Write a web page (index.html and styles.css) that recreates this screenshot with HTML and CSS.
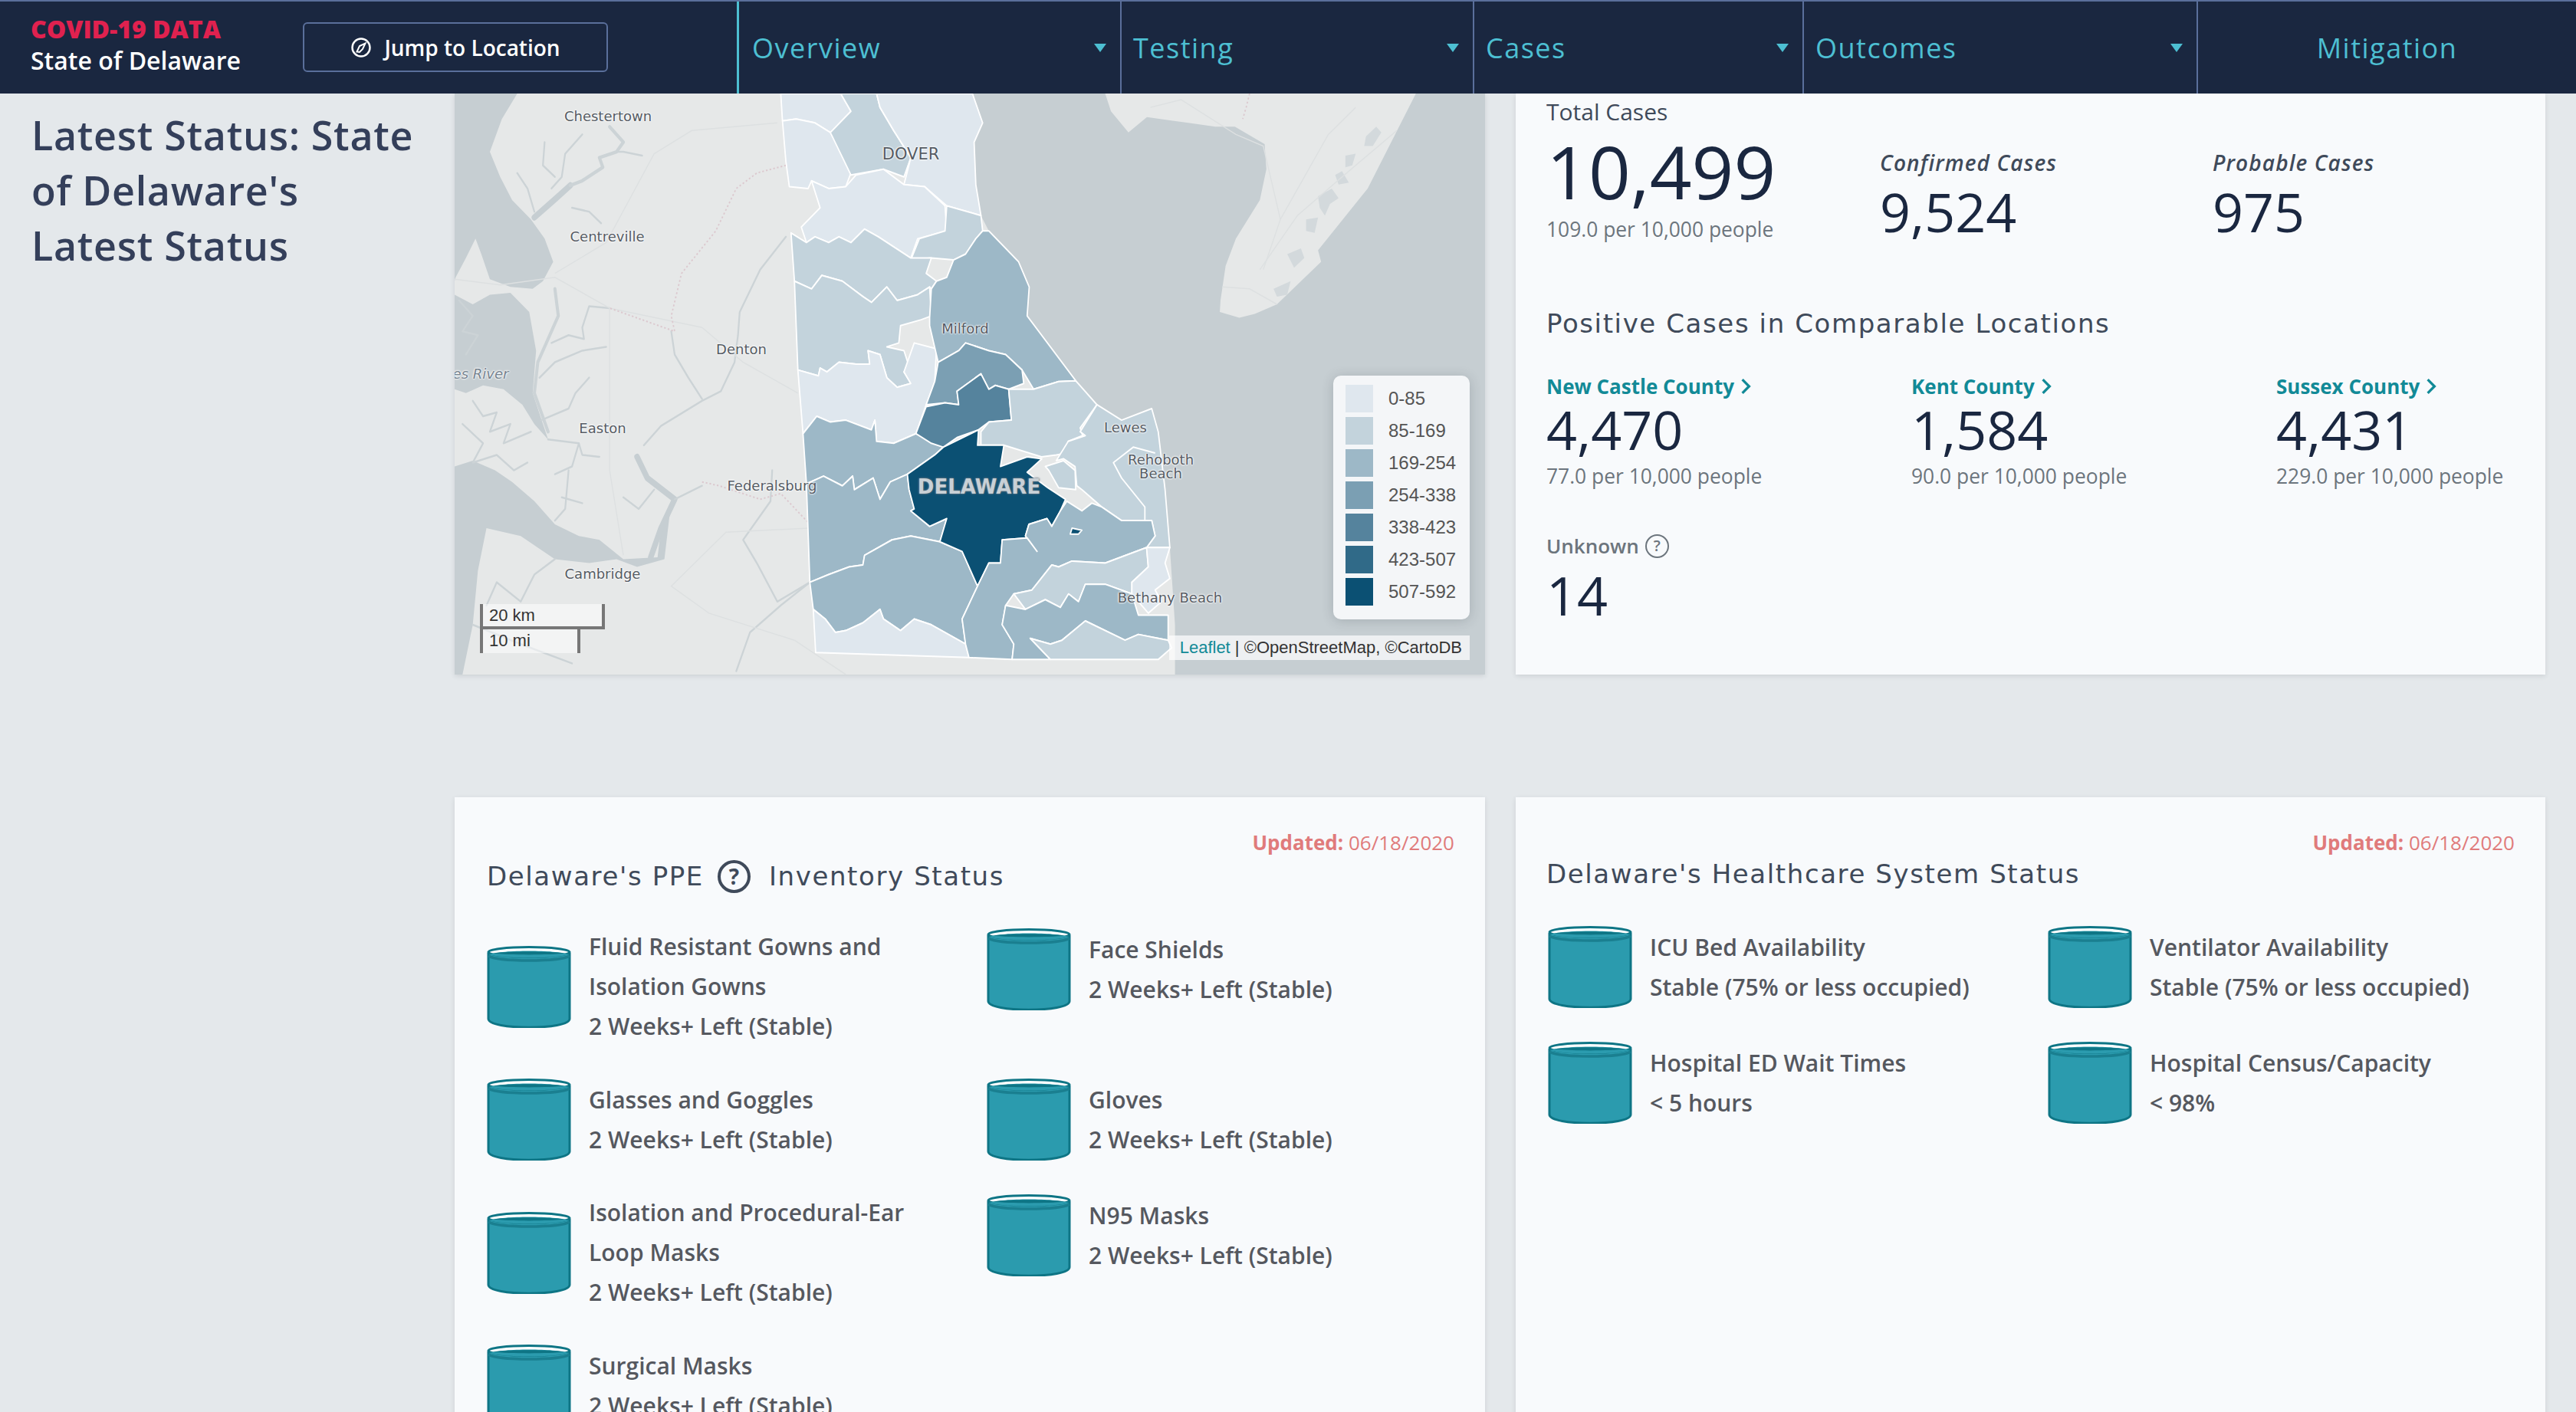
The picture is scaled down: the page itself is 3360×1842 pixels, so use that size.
FILE: index.html
```html
<!DOCTYPE html>
<html lang="en">
<head>
  <meta charset="UTF-8"/>
  <title>COVID-19 Data | State of Delaware</title>
  <link rel="stylesheet" href="styles.css">
</head>
<body>
  <svg class="defs" width="0" height="0">
    <symbol id="barrel" viewBox="0 0 110 107">
      <path d="M2 9V95C2 110 108 110 108 95V9" fill="#2b9bae" stroke="#0e7585" stroke-width="3"/>
      <ellipse cx="55" cy="8" rx="53" ry="6.5" fill="#fff" stroke="#0e7585" stroke-width="3"/>
      <path d="M3 11C20 5 90 5 107 11C90 17 20 17 3 11Z" fill="#2b9bae"/>
      <path d="M8 9.5C30 6.5 80 6.5 102 9.5C80 12 30 12 8 9.5Z" fill="#0e7585"/>
      <path d="M2 13C15 21 95 21 108 13" fill="none" stroke="#1a7f90" stroke-width="3.5"/>
    </symbol>
  </svg>

  <header class="topbar">
    <div class="brand">
      <div class="brand-title">COVID-19 DATA</div>
      <div class="brand-sub">State of Delaware</div>
    </div>
    <button class="jump-btn">
      <svg class="compass" viewBox="0 0 28 28" width="28" height="28">
        <circle cx="14" cy="14" r="11.5" fill="none" stroke="#fff" stroke-width="2.4"/>
        <path d="M19.5 8.5L16 16L12 20L8.5 19.5L12 12Z" fill="none" stroke="#fff" stroke-width="2"/>
      </svg>
      Jump to Location
    </button>
    <nav class="nav">
      <a class="nav-item nav-active">Overview<i class="caret"></i></a>
      <a class="nav-item">Testing<i class="caret"></i></a>
      <a class="nav-item">Cases<i class="caret"></i></a>
      <a class="nav-item">Outcomes<i class="caret"></i></a>
      <a class="nav-item nav-center">Mitigation</a>
    </nav>
  </header>

  <main class="page">
    <aside class="sidebar">
      <h1>Latest Status: State<br>of Delaware's<br>Latest Status</h1>
    </aside>

    <div class="content">
      <section class="map">
        <svg class="map-svg" viewBox="7 24 3011 1505" preserveAspectRatio="none">
          <!-- land -->
          <polygon class="land" points="7,24 1520,24 1550,100 1525,150 1530,260 1545,340 1568,380 1655,460 1686,525 1680,600 1822,768 1884,830 1956,870 2044,840 2063,900 2083,1050 2097,1200 2112,1400 2112,1529 7,1529"/>
          <polygon class="land" points="1908,24 1925,70 1976,125 2030,85 2151,100 2230,110 2287,110 2374,155 2379,220 2360,300 2290,400 2260,470 2245,560 2243,590 2300,605 2345,595 2410,570 2539,460 2530,430 2675,270 2816,24"/>
          <!-- bay -->
          <polygon class="water" points="7,24 190,24 145,90 110,175 140,240 175,300 230,350 270,400 295,460 265,510 235,530 170,525 110,505 85,440 68,400 40,450 10,500 7,510"/>
          <polygon class="water" points="7,545 60,570 110,545 170,540 225,590 245,690 235,800 280,920 240,880 205,830 150,790 90,780 40,800 7,790"/>
          <polygon class="water" points="7,990 60,975 125,1000 175,1030 240,1080 300,1140 370,1170 430,1180 500,1230 600,1225 610,1150 640,1080 620,1230 540,1250 480,1230 400,1240 300,1230 200,1170 100,1150 75,1260 60,1400 30,1529 7,1529"/>
          <polyline class="river wide" points="240,345 300,298 345,262"/>
          <polyline class="river mid" points="345,262 380,250 440,215 430,190 480,175 500,150 460,110"/>
          <polyline class="river" points="480,175 500,175 555,185"/>
          <polyline class="river" points="380,130 330,180 320,240 290,270"/>
          <polyline class="river" points="270,150 265,210 300,240"/>
          <polyline class="river" points="190,230 220,270 240,330"/>
          <polyline class="river" points="350,320 400,330 435,360"/>
          <polyline class="river mid" points="300,530 310,600 280,660 250,720 240,800 280,900"/>
          <polyline class="river" points="460,580 400,575 380,630 385,660 340,650 290,670"/>
          <polyline class="river" points="450,680 380,690 300,720 255,760"/>
          <polyline class="river" points="400,760 360,800 340,840 260,870"/>
          <polyline class="river" points="280,920 370,930 350,990 300,1010"/>
          <polyline class="river" points="370,930 380,960 430,965"/>
          <polyline class="river" points="320,1070 380,1085"/>
          <polyline class="river" points="340,1000 330,1100 300,1130"/>
          <polyline class="river" points="60,820 90,860 130,850 110,900 170,880 150,930 230,900"/>
          <polyline class="river" points="30,880 90,930 60,980 130,960 180,1000 220,980"/>
          <polyline class="river" points="20,560 60,600 30,640 75,650 40,700"/>
          <polyline class="river" points="300,1230 240,1270 200,1340 130,1290 100,1350"/>
          <polyline class="river" points="60,1400 200,1450 350,1500"/>
          <polyline class="river wide" points="540,965 570,1020 650,1075 610,1150 580,1225"/>
          <polyline class="river" points="975,395 900,480 840,590 835,650 825,720 785,795 730,820 610,885 560,935"/>
          <polyline class="river" points="640,640 650,700 690,760 730,815"/>
          <polyline class="river" points="1045,1290 960,1350 870,1420 830,1520"/>
          <polyline class="river" points="1045,1290 950,1340 890,1240 850,1180 930,1080 935,1000"/>
          <polyline class="river" points="650,1075 730,1040"/>
          <polyline class="river" points="500,1070 545,1100 590,1050"/>
          <polyline class="road" points="7,505 140,520 300,500 460,580 730,630 850,720 1010,800"/>
          <polyline class="road" points="300,490 450,410 590,180 700,120 950,100"/>
          <polyline class="road" points="460,580 460,1000 500,1220"/>
          <polyline class="road" points="1040,1150 800,1160 640,1300 750,1370 1000,1440"/>
          <polyline class="road" points="1150,1529 1000,1440"/>
          <polyline class="border-line" points="975,210 890,230 830,270 770,380 670,490 640,600 650,640 460,580"/>
          <polyline class="border-line" points="730,1030 780,1040 900,1075 960,1060 1040,1135"/>
          <!-- cape may detail -->
          <polygon class="pond" points="2670,135 2700,110 2715,125 2690,160 2665,160"/>
          <polygon class="pond" points="2610,185 2640,180 2630,210 2610,215"/>
          <polygon class="pond" points="2580,235 2600,225 2620,255 2590,260"/>
          <polygon class="pond" points="2530,290 2570,270 2590,295 2565,310 2550,340 2535,320"/>
          <polygon class="pond" points="2495,350 2530,345 2520,385 2495,380"/>
          <polygon class="pond" points="2440,440 2480,425 2490,450 2460,475"/>
          <polygon class="pond" points="2400,530 2450,510 2440,545 2410,550"/>
          <polyline class="road" points="2360,480 2470,340 2600,240 2760,120"/>
          <polyline class="road" points="2250,525 2330,530 2410,570"/>
          <polyline class="road" points="2040,60 2130,40 2290,130 2370,160 2420,350 2370,480"/>
          <polyline class="road" points="2420,350 2560,130 2640,60"/>
          <polyline class="border-line" points="2330,24 2320,60 2310,90"/>

          <!-- counties -->
          <g class="tracts">
            <polygon class="c0" points="960,24 1135,24 1165,70 1105,125 1060,100 1005,90 965,95"/>
            <polygon class="c0" points="965,95 1005,90 1060,100 1105,125 1140,180 1165,230 1150,265 1100,270 1050,250 1040,270 985,265 975,200"/>
            <polygon class="c1" points="1135,24 1240,24 1250,60 1290,120 1340,190 1320,240 1260,220 1165,235 1105,125 1165,70"/>
            <polygon class="c0" points="1240,24 1520,24 1550,100 1525,150 1530,260 1545,340 1445,315 1380,265 1320,260 1340,190 1290,120 1250,60"/>
            <polygon class="c0" points="1050,250 1100,270 1150,265 1180,235 1260,220 1320,260 1380,265 1440,315 1445,380 1360,400 1340,450 1245,395 1205,375 1165,410 1130,395 1100,410 1060,395 1035,410 1020,370 1075,320"/>
            <polygon class="c1" points="1445,315 1545,340 1550,380 1530,400 1500,440 1465,455 1400,450 1340,455 1365,400 1440,380"/>
            <polygon class="c1" points="990,385 1035,410 1060,395 1100,410 1130,395 1165,410 1205,375 1245,395 1340,450 1400,450 1385,490 1415,510 1400,530 1395,525 1360,545 1300,560 1270,525 1225,565 1200,550 1140,510 1080,495 1050,530 1000,510"/>
            <polygon class="c1" points="1000,510 1050,530 1080,495 1140,510 1200,550 1225,565 1270,525 1300,560 1360,545 1395,525 1400,600 1370,610 1310,625 1305,670 1270,680 1320,690 1340,745 1320,745 1340,775 1300,785 1270,760 1250,700 1215,690 1220,725 1180,725 1130,720 1095,745 1075,735 1070,755 1010,740"/>
            <polygon class="c0" points="1010,740 1070,755 1075,735 1095,745 1130,720 1180,725 1220,725 1215,690 1250,700 1270,760 1300,785 1340,775 1320,745 1350,670 1415,685 1410,770 1385,830 1355,905 1290,930 1240,925 1235,870 1225,895 1150,870 1105,875 1065,860 1025,905"/>
            <polygon class="c2" points="1025,905 1065,860 1105,875 1150,870 1225,895 1235,870 1240,925 1290,930 1355,905 1435,940 1410,960 1330,1010 1280,1030 1250,1075 1230,1020 1175,1050 1170,1015 1140,1040 1085,1015 1035,1035"/>
            <polygon class="c2" points="1035,1035 1085,1015 1140,1040 1170,1015 1175,1050 1230,1020 1250,1075 1280,1030 1330,1010 1335,1050 1350,1100 1340,1105 1395,1145 1445,1125 1425,1185 1340,1170 1285,1180 1205,1220 1200,1245 1160,1250 1100,1270 1045,1290"/>
            <polygon class="c2" points="1045,1290 1100,1270 1160,1250 1200,1245 1205,1220 1285,1180 1340,1170 1425,1185 1490,1210 1535,1300 1490,1385 1500,1450 1400,1400 1350,1385 1310,1415 1260,1385 1250,1360 1200,1395 1150,1415 1120,1420 1090,1385 1055,1360"/>
            <polygon class="c0" points="1055,1360 1090,1385 1120,1420 1150,1415 1200,1395 1250,1360 1260,1385 1310,1415 1350,1385 1400,1400 1500,1450 1510,1485 1062,1472"/>
            <polygon class="c2" points="1500,440 1530,400 1550,380 1568,380 1655,460 1686,525 1680,600 1822,768 1772,770 1699,790 1665,740 1617,700 1568,690 1500,670 1480,690 1420,720 1395,625 1395,605 1400,530 1415,510 1445,500 1465,455"/>
            <polygon class="c3" points="1420,720 1480,690 1500,670 1568,690 1617,700 1665,740 1670,775 1626,790 1587,780 1568,790 1545,750 1475,795 1480,830 1440,825 1385,830 1410,770"/>
            <polygon class="c4" points="1385,835 1440,825 1480,830 1475,795 1545,750 1568,790 1587,780 1626,790 1634,870 1568,875 1538,895 1475,915 1435,940 1400,930 1355,905"/>
            <polygon class="c1" points="1545,935 1545,900 1568,875 1634,870 1626,790 1699,790 1772,770 1822,768 1884,830 1835,890 1842,910 1800,925 1830,950 1765,960 1722,965 1612,935"/>
            <polygon class="c1" points="1884,830 1956,870 2044,840 2063,900 2083,1050 2097,1200 2029,1200 2054,1170 2044,1130 1956,1130 1898,1095 1840,1050 1825,1040 1820,990 1786,970 1765,975 1800,925 1850,910 1835,900"/>
            <polygon class="c1" points="1733,990 1786,975 1820,1000 1822,1050 1772,1045 1743,1000"/>
            <polygon class="c6" points="1435,940 1538,895 1535,935 1612,935 1602,990 1680,965 1723,970 1680,1005 1740,1045 1792,1075 1777,1105 1752,1145 1738,1125 1685,1140 1675,1170 1709,1210 1680,1175 1607,1180 1602,1240 1568,1240 1535,1300 1490,1210 1425,1185 1445,1125 1395,1145 1340,1105 1350,1100 1335,1050 1330,1010 1410,960"/>
            <polygon class="c2" points="1777,1105 1796,1080 1840,1105 1869,1085 1898,1095 1956,1130 2044,1130 2054,1170 2029,1200 1908,1240 1811,1235 1772,1250 1752,1245 1694,1310 1641,1320 1617,1350 1607,1400 1641,1450 1636,1490 1510,1485 1500,1450 1490,1385 1535,1300 1568,1240 1602,1240 1607,1180 1680,1175 1709,1210 1675,1170 1685,1140 1738,1125 1752,1145"/>
            <polygon class="c1" points="1752,1245 1772,1250 1811,1235 1908,1240 2029,1200 2034,1250 1986,1290 1986,1320 1908,1295 1850,1295 1830,1340 1801,1320 1777,1355 1733,1335 1675,1360 1641,1320 1694,1310"/>
            <polygon class="c2" points="1675,1360 1733,1335 1777,1355 1801,1320 1830,1340 1850,1295 1908,1295 1986,1320 2005,1375 2092,1375 2092,1440 2005,1425 1966,1440 1850,1390 1782,1440 1748,1450 1689,1435 1748,1490 1636,1490 1641,1450 1607,1400 1617,1350"/>
            <polygon class="c1" points="1689,1435 1748,1450 1782,1440 1850,1390 1966,1440 2005,1425 2092,1440 2102,1460 2063,1490 1748,1490"/>
            <polygon class="c0" points="2029,1200 2097,1200 2083,1240 2097,1280 2054,1310 2073,1340 2034,1370 1986,1320 1986,1290 2034,1250"/>
            <polygon class="c6" points="1811,1150 1840,1155 1830,1165 1806,1165"/>
            <polyline class="tract-line" points="2054,955 1990,940 1932,980 1956,1020 2024,1095 2024,1130"/>
          </g>
        </svg>

        <span class="map-label lbl-chestertown">Chestertown</span>
        <span class="map-label lbl-centreville">Centreville</span>
        <span class="map-label lbl-denton">Denton</span>
        <span class="map-label lbl-easton">Easton</span>
        <span class="map-label lbl-federalsburg">Federalsburg</span>
        <span class="map-label lbl-cambridge">Cambridge</span>
        <span class="map-label lbl-river">es River</span>
        <span class="map-label lbl-dover">DOVER</span>
        <span class="map-label lbl-milford">Milford</span>
        <span class="map-label lbl-delaware">DELAWARE</span>
        <span class="map-label lbl-lewes">Lewes</span>
        <span class="map-label lbl-rehoboth">Rehoboth<br>Beach</span>
        <span class="map-label lbl-bethany">Bethany Beach</span>

        <div class="scale">
          <div class="scale-km">20 km</div>
          <div class="scale-mi">10 mi</div>
        </div>

        <div class="legend">
          <div class="legend-row"><i class="swatch s0"></i>0-85</div>
          <div class="legend-row"><i class="swatch s1"></i>85-169</div>
          <div class="legend-row"><i class="swatch s2"></i>169-254</div>
          <div class="legend-row"><i class="swatch s3"></i>254-338</div>
          <div class="legend-row"><i class="swatch s4"></i>338-423</div>
          <div class="legend-row"><i class="swatch s5"></i>423-507</div>
          <div class="legend-row"><i class="swatch s6"></i>507-592</div>
        </div>

        <div class="attribution"><a>Leaflet</a> | ©OpenStreetMap, ©CartoDB</div>
      </section>

      <section class="card cases-card">
        <div class="totals">
          <div class="total-main">
            <div class="total-label">Total Cases</div>
            <div class="total-num">10,499</div>
            <div class="per">109.0 per 10,000 people</div>
          </div>
          <div class="total-part">
            <div class="part-label">Confirmed Cases</div>
            <div class="num">9,524</div>
          </div>
          <div class="total-part">
            <div class="part-label">Probable Cases</div>
            <div class="num">975</div>
          </div>
        </div>

        <h2 class="card-title compare-title">Positive Cases in Comparable Locations</h2>

        <div class="counties">
          <div>
            <a class="county-link">New Castle County<svg class="chev" viewBox="0 0 12 20" width="14" height="22"><path d="M2 2L10 10L2 18" fill="none" stroke="#128a97" stroke-width="3"/></svg></a>
            <div class="num">4,470</div>
            <div class="per">77.0 per 10,000 people</div>
          </div>
          <div>
            <a class="county-link">Kent County<svg class="chev" viewBox="0 0 12 20" width="14" height="22"><path d="M2 2L10 10L2 18" fill="none" stroke="#128a97" stroke-width="3"/></svg></a>
            <div class="num">1,584</div>
            <div class="per">90.0 per 10,000 people</div>
          </div>
          <div>
            <a class="county-link">Sussex County<svg class="chev" viewBox="0 0 12 20" width="14" height="22"><path d="M2 2L10 10L2 18" fill="none" stroke="#128a97" stroke-width="3"/></svg></a>
            <div class="num">4,431</div>
            <div class="per">229.0 per 10,000 people</div>
          </div>
        </div>

        <div class="unknown">
          <div class="unknown-label">Unknown <span class="help help-small">?</span></div>
          <div class="num">14</div>
        </div>
      </section>

      <section class="card status-card">
        <div class="updated"><b>Updated:</b> 06/18/2020</div>
        <h2 class="card-title ppe-title">Delaware's PPE <span class="help help-big">?</span> Inventory Status</h2>
        <div class="items ppe-items">
          <div class="item">
            <svg class="barrel"><use href="#barrel"/></svg>
            <div class="item-text">Fluid Resistant Gowns and<br>Isolation Gowns<br>2 Weeks+ Left (Stable)</div>
          </div>
          <div class="item item-shift">
            <svg class="barrel"><use href="#barrel"/></svg>
            <div class="item-text">Face Shields<br>2 Weeks+ Left (Stable)</div>
          </div>
          <div class="item">
            <svg class="barrel"><use href="#barrel"/></svg>
            <div class="item-text">Glasses and Goggles<br>2 Weeks+ Left (Stable)</div>
          </div>
          <div class="item">
            <svg class="barrel"><use href="#barrel"/></svg>
            <div class="item-text">Gloves<br>2 Weeks+ Left (Stable)</div>
          </div>
          <div class="item">
            <svg class="barrel"><use href="#barrel"/></svg>
            <div class="item-text">Isolation and Procedural-Ear<br>Loop Masks<br>2 Weeks+ Left (Stable)</div>
          </div>
          <div class="item item-shift">
            <svg class="barrel"><use href="#barrel"/></svg>
            <div class="item-text">N95 Masks<br>2 Weeks+ Left (Stable)</div>
          </div>
          <div class="item">
            <svg class="barrel"><use href="#barrel"/></svg>
            <div class="item-text">Surgical Masks<br>2 Weeks+ Left (Stable)</div>
          </div>
        </div>
      </section>

      <section class="card status-card">
        <div class="updated"><b>Updated:</b> 06/18/2020</div>
        <h2 class="card-title care-title">Delaware's Healthcare System Status</h2>
        <div class="items care-items">
          <div class="item">
            <svg class="barrel"><use href="#barrel"/></svg>
            <div class="item-text">ICU Bed Availability<br>Stable (75% or less occupied)</div>
          </div>
          <div class="item">
            <svg class="barrel"><use href="#barrel"/></svg>
            <div class="item-text">Ventilator Availability<br>Stable (75% or less occupied)</div>
          </div>
          <div class="item">
            <svg class="barrel"><use href="#barrel"/></svg>
            <div class="item-text">Hospital ED Wait Times<br>&lt; 5 hours</div>
          </div>
          <div class="item">
            <svg class="barrel"><use href="#barrel"/></svg>
            <div class="item-text">Hospital Census/Capacity<br>&lt; 98%</div>
          </div>
        </div>
      </section>
    </div>
  </main>
</body>
</html>
```

FILE: styles.css
```css
html, body {
  margin:0;
  height:1842px;
  overflow:hidden;
}
body {
  background:#e4e8eb;
  color:#1a2740;
  font-family:'Open Sans',Arial,sans-serif;
}
.defs { position:absolute; }

/* top bar */
.topbar {
  height:122px;
  box-sizing:border-box;
  border-top:2px solid #5a6f9b;
  background:#1a2740;
  display:flex;
  align-items:stretch;
}
.brand {
  width:395px;
  box-sizing:border-box;
  padding:14px 0 0 40px;
}
.brand-title {
  color:#e0214f;
  font-size:32px;
  font-weight:800;
  line-height:44px;
}
.brand-sub {
  color:#fff;
  font-size:32px;
  font-weight:600;
  line-height:38px;
}
.jump-btn {
  width:398px;
  height:65px;
  margin:27px 168px 0 0;
  box-sizing:border-box;
  background:none;
  border:2px solid #5a6f9b;
  border-radius:6px;
  color:#fff;
  font-family:inherit;
  font-size:28px;
  font-weight:600;
  display:flex;
  align-items:center;
  justify-content:center;
  gap:16px;
}
.nav {
  flex:1;
  display:grid;
  grid-template-columns:500px 460px 430px 514px 495px;
}
.nav-item {
  position:relative;
  box-sizing:border-box;
  border-left:2px solid #5a6f9b;
  padding:0 0 0 15px;
  color:#4dbfd2;
  font-size:36px;
  font-weight:500;
  letter-spacing:1.5px;
  line-height:122px;
  height:120px;
}
.nav-active {
  border-left:3px solid #4dbfd2;
  padding-left:17px;
}
.nav-center { text-align:center; padding:0; }
.caret {
  position:absolute;
  right:18px;
  top:55px;
  width:0;
  height:0;
  border-left:8.5px solid transparent;
  border-right:8.5px solid transparent;
  border-top:11px solid #4dbfd2;
}

/* page */
.page {
  display:flex;
}
.sidebar {
  width:593px;
  flex:none;
  box-sizing:border-box;
  padding:18px 0 0 41px;
}
.sidebar h1 {
  margin:0;
  color:#343f5a;
  font-size:52px;
  font-weight:600;
  letter-spacing:0.7px;
  line-height:72px;
}
.content {
  width:2727px;
  display:grid;
  grid-template-columns:1344px 1343px;
  grid-template-rows:758px 900px;
  column-gap:40px;
  row-gap:160px;
}

/* map */
.map {
  position:relative;
  overflow:hidden;
  background:#c6ced2;
  box-shadow:0 2px 6px rgba(40,50,60,0.12);
}
.map-svg {
  display:block;
  width:100%;
  height:100%;
}
.land { fill:#e6e8e8; }
.water { fill:#c6ced2; }
.pond { fill:#d3d9dc; }
.river { fill:none; stroke:#ccd3d6; stroke-width:5; stroke-linejoin:round; stroke-linecap:round; }
.river.mid { stroke-width:9; }
.river.wide { stroke:#c6ced2; stroke-width:16; }
.road { fill:none; stroke:#dde0e1; stroke-width:3; }
.border-line { fill:none; stroke:#dcc9cf; stroke-width:4; stroke-dasharray:5 6; }
.tracts polygon, .tract-line { stroke:#fff; stroke-width:4; stroke-linejoin:round; }
.tract-line { fill:none; }
.c0 { fill:#dfe7ee; }
.c1 { fill:#c3d3dc; }
.c2 { fill:#9db8c7; }
.c3 { fill:#7b9fb3; }
.c4 { fill:#55839d; }
.c5 { fill:#306a88; }
.c6 { fill:#0b5073; }

.map-label {
  position:absolute;
  transform:translate(-50%,-50%);
  white-space:nowrap;
  text-align:center;
  color:#555b63;
  font-family:'DejaVu Sans',Arial,sans-serif;
  font-size:18px;
  line-height:18px;
  text-shadow:0 0 2px #fff,0 0 2px #fff,0 0 3px #fff;
}
.lbl-chestertown { left:200px; top:30px; }
.lbl-centreville { left:199px; top:187px; }
.lbl-denton { left:374px; top:334px; }
.lbl-easton { left:193px; top:437px; }
.lbl-federalsburg { left:414px; top:512px; }
.lbl-cambridge { left:193px; top:627px; }
.lbl-river { left:34px; top:366px; font-style:italic; color:#75828e; }
.lbl-dover { left:595px; top:79px; font-size:21px; }
.lbl-milford { left:666px; top:307px; }
.lbl-delaware {
  left:684px;
  top:513px;
  color:#c8d0d6;
  font-size:26px;
  font-weight:bold;
  text-shadow:0 0 2px #6b7780,0 0 3px #6b7780;
}
.lbl-lewes { left:875px; top:436px; }
.lbl-rehoboth { left:921px; top:487px; }
.lbl-bethany { left:933px; top:658px; }

.scale {
  position:absolute;
  left:33px;
  top:666px;
  color:#333;
  font-family:'Liberation Sans',Arial,sans-serif;
  font-size:22px;
}
.scale-km, .scale-mi {
  box-sizing:border-box;
  background:rgba(255,255,255,0.5);
  border:4px solid #777;
  padding-left:8px;
}
.scale-km {
  width:163px;
  height:33px;
  line-height:29px;
  border-top:none;
}
.scale-mi {
  width:131px;
  height:31px;
  line-height:30px;
  border-top:none;
  border-bottom:none;
}

.legend {
  position:absolute;
  right:20px;
  top:368px;
  width:178px;
  height:318px;
  box-sizing:border-box;
  padding:12px 16px;
  background:#f4f6f8;
  border-radius:10px;
  box-shadow:0 2px 16px rgba(40,50,60,0.2);
  color:#555;
  font-family:'Liberation Sans',Arial,sans-serif;
  font-size:24px;
}
.legend-row {
  display:flex;
  align-items:center;
  gap:20px;
  height:36px;
  margin-bottom:6px;
}
.swatch { width:36px; height:36px; flex:none; }
.s0 { background:#dfe7ee; }
.s1 { background:#c3d3dc; }
.s2 { background:#9db8c7; }
.s3 { background:#7b9fb3; }
.s4 { background:#55839d; }
.s5 { background:#306a88; }
.s6 { background:#0b5073; }

.attribution {
  position:absolute;
  right:20px;
  top:707px;
  height:32px;
  line-height:32px;
  padding:0 10px 0 14px;
  background:rgba(255,255,255,0.7);
  color:#333;
  font-family:'Liberation Sans',Arial,sans-serif;
  font-size:22px;
}
.attribution a { color:#128a97; }

/* cards */
.card {
  position:relative;
  box-sizing:border-box;
  background:#f8fafc;
  box-shadow:0 2px 6px rgba(40,50,60,0.12);
  padding:0 40px;
}
.card-title {
  margin:0;
  color:#3f4a5a;
  font-family:'DejaVu Sans',Arial,sans-serif;
  font-size:34px;
  font-weight:400;
  letter-spacing:1.6px;
  line-height:44px;
}
.num {
  color:#1a2740;
  font-size:70px;
  font-weight:500;
  line-height:80px;
}
.per {
  color:#6c757d;
  font-size:26.4px;
  font-weight:500;
  line-height:38px;
}
.totals {
  display:flex;
  padding-top:4px;
}
.total-main { width:435px; flex:none; }
.total-label {
  color:#3f4a5a;
  font-size:30px;
  font-weight:500;
  line-height:40px;
}
.total-num {
  font-size:96px;
  font-weight:500;
  line-height:110px;
  margin-top:2px;
}
.total-main .per { margin-top:2px; }
.total-part {
  width:434px;
  flex:none;
  padding-top:66px;
}
.total-part .num { margin-top:4px; }
.part-label {
  color:#3f4a5a;
  font-size:28px;
  font-style:italic;
  font-weight:600;
  letter-spacing:1.1px;
  line-height:40px;
}
.compare-title { margin-top:82px; }
.counties {
  display:grid;
  grid-template-columns:repeat(3,476px);
  margin-top:42px;
}
.counties .num { margin-top:-2px; }
.counties .per { margin-top:2px; }
.county-link {
  display:flex;
  align-items:center;
  gap:8px;
  color:#128a97;
  font-size:26px;
  font-weight:700;
  line-height:36px;
}
.unknown { margin-top:54px; }
.unknown .num { margin-top:6px; }
.unknown-label {
  display:flex;
  align-items:center;
  gap:8px;
  color:#6c757d;
  font-size:26px;
  font-weight:600;
  line-height:36px;
}
.help {
  display:inline-block;
  box-sizing:border-box;
  border-radius:50%;
  text-align:center;
  font-family:'Open Sans',Arial,sans-serif;
  font-weight:700;
  letter-spacing:0;
}
.help-small {
  width:31px;
  height:31px;
  border:2px solid #6c757d;
  font-size:20px;
  font-weight:600;
  line-height:26px;
}
.help-big {
  width:43px;
  height:43px;
  margin:0 24px 0 18px;
  border:4px solid #3f4a5a;
  font-size:28px;
  line-height:35px;
}
.updated {
  position:absolute;
  right:40px;
  top:40px;
  color:#e07b7b;
  font-size:26px;
  line-height:38px;
}
.updated b { font-weight:700; }
.ppe-title { padding:81px 0 0 2px; display:flex; align-items:center; }
.ppe-title .help-big { flex:none; }
.care-title { padding-top:78px; }
.items {
  display:grid;
  grid-template-columns:652px 1fr;
}
.ppe-items { row-gap:42px; margin-top:44px; padding-left:2px; }
.care-items { row-gap:44px; margin-top:46px; padding-left:2px; }
.item {
  display:flex;
  align-items:center;
  align-self:start;
  gap:23px;
}
.item-shift { margin-top:2px; }
.barrel { width:110px; height:107px; flex:none; }
.item-text {
  color:#55585f;
  font-size:30px;
  font-weight:600;
  line-height:52px;
}
```
